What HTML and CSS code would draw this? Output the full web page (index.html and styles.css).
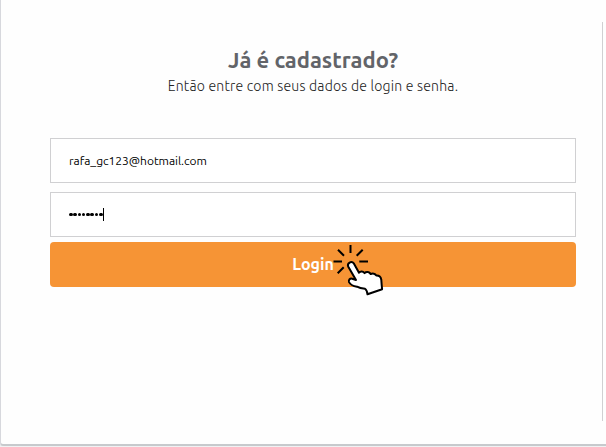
FILE: index.html
```html
<!DOCTYPE html>
<html lang="pt-BR">
<head>
<meta charset="utf-8">
<title>Login</title>
<link rel="stylesheet" href="styles.css">
</head>
<body>
<main class="card">
  <section class="login">
    <h1 class="title"><span>Já é cadastrado?</span></h1>
    <p class="subtitle">Então entre com seus dados de login e senha.</p>
    <form class="form">
      <div class="field"><span class="email">rafa_gc123@hotmail.com</span></div>
      <div class="field"><span class="dots"><i></i><i></i><i></i><i></i><i></i><i></i><i></i><i></i></span><span class="caret"></span></div>
      <button class="submit" type="button">Login
        <svg class="pointer" width="54" height="54" viewBox="0 0 54 54" fill="none" stroke="#000" stroke-width="2">
          <path d="M19.500 1v8M7 5.800l6 6M31.700 5.800l-6 6M2.500 17.600h8.500M28.300 17.600h8.700M12.700 23.300l-6 6"/>
          <path fill="#fff" stroke-linejoin="round" d="M17.300 22.800c-1.600-3.800 3.200-6.500 5.700-3.100l5 9c1.500-1.800 3.800-1.600 5.600.4 1.700-1.800 4.800-1.300 6 .9 2-1 4.500-.4 5.700 1.600 3-.2 4.500 1.500 5 4.100.2 3 .4 6 .8 9.500L36.500 50.300c-.3-2.700-1.200-4.600-2.500-5.500-3-.3-6-1-8-2.100-3.300-.5-6.600-2-8-4.600-.6-2.400 1-4 3.200-3.400l3.800 1.300z"/>
        </svg>
      </button>
    </form>
  </section>
  <div class="divider"></div>
</main>
</body>
</html>
```
FILE: styles.css
```css
* { box-sizing: border-box; }
body { margin: 0; background: #f1f2f3; overflow: hidden; font-family: Ubuntu, "Noto Sans", "Open Sans", sans-serif; }
.card {
  display: flex;
  width: 616px;
  height: 446px;
  padding-top: 22px;
  background: #fefefe;
  border-left: 1px solid #d7d8dd;
  border-bottom: 2px solid #c7cacd;
  border-bottom-left-radius: 4px;
  box-shadow: 0 1px 1px #dcdee0;
}
.login { width: 601px; padding: 23px 26px 0 49px; }
.title { margin: 0; height: 30px; font-size: 22px; line-height: 30px; font-weight: 700; color: #626469; text-align: center; }
.subtitle { margin: 0; height: 22px; font: 300 14px/22px Ubuntu, "Open Sans", sans-serif; color: #222; text-align: center; white-space: nowrap; letter-spacing: 0.21px; }
.form { display: flex; flex-direction: column; margin-top: 41px; }
.field { display: flex; align-items: center; height: 45px; margin-bottom: 9px; padding-left: 18px; border: 1px solid #d0d0d2; background: #fff; }
.field + .field { margin-bottom: 5px; }
.email { font-size: 12px; color: #000; letter-spacing: -0.03px; }
.dots { display: flex; gap: 0.8px; }
.dots i { width: 3.5px; height: 3.5px; border-radius: 50%; background: #000; }
.caret { width: 1px; height: 13px; background: #000; }
.submit { position: relative; height: 45px; border: 0; border-radius: 4px; background: #f69435; color: #fff; font: 700 16px/45px Ubuntu, "Noto Sans", sans-serif; padding: 0; }
.pointer { position: absolute; left: 280.5px; top: 2px; }
.divider { width: 1px; height: 399px; background: #d0d0d2; }
```
